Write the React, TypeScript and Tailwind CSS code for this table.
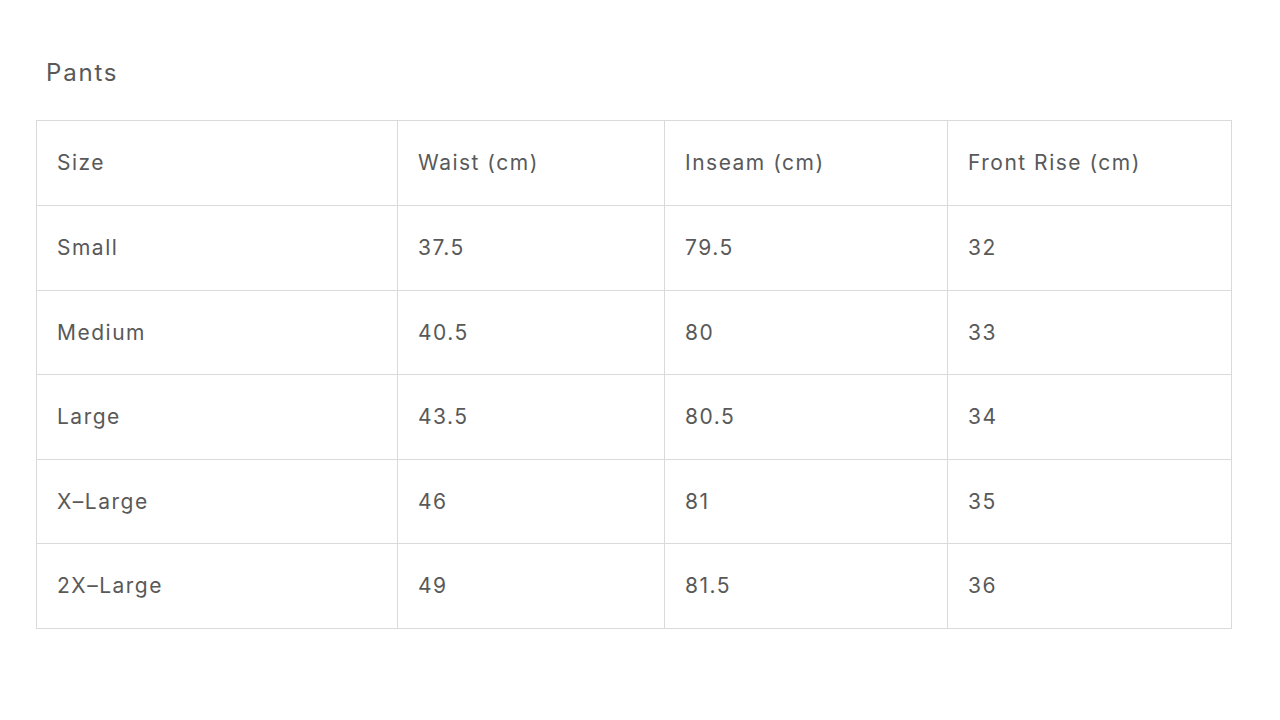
const rows = [
  ["Small", "37.5", "79.5", "32"],
  ["Medium", "40.5", "80", "33"],
  ["Large", "43.5", "80.5", "34"],
  ["X–Large", "46", "81", "35"],
  ["2X–Large", "49", "81.5", "36"],
];

export default function App() {
  return (
    <div className="w-[1280px] h-[720px] bg-white font-['Inter',sans-serif] text-[#595959]">
      <div className="pt-[58px] pl-[46px] text-[24px] leading-[30px] tracking-[1.8px]">
        Pants
      </div>
      <div className="pt-[32px] pl-[36px]">
        <table className="border-collapse w-[1195px] table-fixed text-[21px] tracking-[1.5px]">
          <colgroup>
            <col className="w-[361px]" />
            <col className="w-[267px]" />
            <col className="w-[283px]" />
            <col className="w-[284px]" />
          </colgroup>
          <tbody>
            <tr className="h-[85px]">
              {["Size", "Waist (cm)", "Inseam (cm)", "Front Rise (cm)"].map((h) => (
                <td key={h} className="border border-[#dadada] pl-[20px] align-middle font-normal">
                  {h}
                </td>
              ))}
            </tr>
            {rows.map((r) => (
              <tr key={r[0]} className="h-[84.6px]">
                {r.map((c, i) => (
                  <td key={i} className="border border-[#dadada] pl-[20px] align-middle">
                    {c}
                  </td>
                ))}
              </tr>
            ))}
          </tbody>
        </table>
      </div>
    </div>
  );
}
